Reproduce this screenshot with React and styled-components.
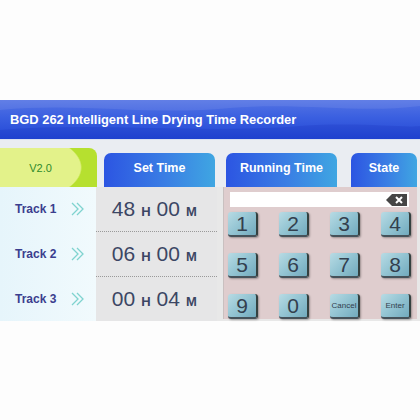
import React from "react";
import styled, { createGlobalStyle } from "styled-components";

const Global = createGlobalStyle`
  html, body { margin: 0; padding: 0; background: #ffffff; }
  body { font-family: "Liberation Sans", Arial, sans-serif; }
`;

const Page = styled.div`
  width: 420px;
  height: 420px;
  overflow: hidden;
  background: #fdfdfd;
  display: flex;
  flex-direction: column;
`;

const TopSpace = styled.div`
  height: 100px;
  flex: none;
`;

const Header = styled.div`
  position: relative;
  height: 39px;
  flex: none;
  background: linear-gradient(180deg, #5574e4 0%, #3a5fe0 45%, #2347d6 100%);
  display: flex;
  align-items: center;
  padding-left: 10px;
  overflow: hidden;
`;

const Wave = styled.svg`
  position: absolute;
  left: 0;
  top: 0;
  width: 420px;
  height: 39px;
`;

const Title = styled.span`
  position: relative;
  color: #ffffff;
  font-weight: bold;
  font-size: 12.9px;
`;

const Band = styled.div`
  height: 47px;
  flex: none;
  background: #eaedf2;
  display: flex;
  align-items: flex-end;
  border-top: 1px solid #d8dff0;
`;

const VersionTab = styled.div`
  width: 97px;
  height: 39px;
  border-top-right-radius: 8px;
  background: radial-gradient(ellipse 82px 38px at 0 50%, #e3f28a 0 98%, #b6e02f 100%);
  display: flex;
  align-items: center;
  justify-content: center;
  padding-right: 16px;
  box-sizing: border-box;
  color: #2f8a2a;
  font-size: 11px;
`;

const Tab = styled.div`
  margin-left: ${(p) => p.$ml}px;
  width: ${(p) => p.$w}px;
  height: 34px;
  border-radius: 7px 7px 0 0;
  background: linear-gradient(90deg, #2c55e2 0%, #3a7ee4 55%, #3fa6e2 100%);
  color: #ffffff;
  font-weight: bold;
  font-size: 12.5px;
  display: flex;
  align-items: center;
  justify-content: center;
  padding-bottom: 4px;
  box-sizing: border-box;
`;

const Body = styled.div`
  height: 134px;
  flex: none;
  display: flex;
`;

const LabelCol = styled.div`
  width: 97px;
  background: linear-gradient(90deg, #e6f5fb, #f1fafd);
  display: flex;
  flex-direction: column;
`;

const LabelRow = styled.div`
  flex: 1;
  display: flex;
  align-items: center;
  padding-left: 15px;
  gap: 14px;
  color: #3b3e8e;
  font-weight: bold;
  font-size: 12px;
`;

const TimeCol = styled.div`
  width: 123px;
  background: #e6e6e7;
  display: flex;
  flex-direction: column;
`;

const TimeRow = styled.div`
  flex: 1;
  display: flex;
  align-items: center;
  justify-content: center;
  gap: 6px;
  color: #3c4664;
  border-top: ${(p) => (p.$line ? "1px dotted #9a9a9a" : "none")};
  padding-right: 4px;
`;

const Num = styled.span`
  font-size: 21px;
`;

const Unit = styled.span`
  font-size: 13px;
  font-weight: bold;
  margin-top: 4px;
`;

const RightArea = styled.div`
  flex: 1;
  background: #e8e8e8;
  padding-left: 6px;
  padding-right: 3px;
  padding-bottom: 2px;
  display: flex;
`;

const Keypad = styled.div`
  flex: 1;
  background: #dfcdce;
  border-left: 1px solid #c9c0c0;
  padding: 5px 6px 0 4px;
  display: flex;
  flex-direction: column;
`;

const Input = styled.div`
  height: 16px;
  background: #ffffff;
  margin-left: 2px;
  margin-right: 2px;
  display: flex;
  align-items: center;
  justify-content: flex-end;
  padding-right: 2px;
`;

const Keys = styled.div`
  margin-top: 5px;
  display: grid;
  grid-template-columns: repeat(4, 30px);
  column-gap: 21px;
  row-gap: 16px;
`;

const Key = styled.div`
  height: 23px;
  border-radius: 3px;
  background: linear-gradient(135deg, #b8dbe4 0%, #96c6d4 45%, #72aabd 100%);
  border-right: 2px solid #34403f;
  border-bottom: 2px solid #46525a;
  box-shadow: 1px 1px 2px rgba(0, 0, 0, 0.3);
  display: flex;
  align-items: center;
  justify-content: center;
  color: #33404e;
  font-size: ${(p) => (p.$small ? "8px" : "21px")};
  line-height: 1;
`;

const Chevrons = () => (
  <svg width="16" height="16" viewBox="0 0 16 16" fill="none" stroke="#7fd3cf" strokeWidth="1.3">
    <path d="M2 2 L8 8 L2 14" />
    <path d="M7 2 L13 8 L7 14" />
  </svg>
);

const Backspace = () => (
  <svg width="21" height="12" viewBox="0 0 21 12">
    <path d="M6 0 H21 V12 H6 L0 6 Z" fill="#454545" />
    <path d="M10 3 L16 9 M16 3 L10 9" stroke="#ffffff" strokeWidth="2" />
  </svg>
);

const tracks = ["Track 1", "Track 2", "Track 3"];
const times = [
  ["48", "00"],
  ["06", "00"],
  ["00", "04"],
];
const keys = ["1", "2", "3", "4", "5", "6", "7", "8", "9", "0", "Cancel", "Enter"];

export default function App() {
  return (
    <Page>
      <Global />
      <TopSpace />
      <Header>
        <Wave viewBox="0 0 420 39" preserveAspectRatio="none">
          <path d="M0 10 C80 2 150 16 230 8 C300 2 360 14 420 6 L420 0 L0 0 Z" fill="rgba(255,255,255,0.08)" />
          <path d="M0 30 C100 22 200 34 300 26 C360 22 400 28 420 26 L420 39 L0 39 Z" fill="rgba(0,20,160,0.12)" />
        </Wave>
        <Title>BGD 262 Intelligent Line Drying Time Recorder</Title>
      </Header>
      <Band>
        <VersionTab>V2.0</VersionTab>
        <Tab $ml={7} $w={111}>Set Time</Tab>
        <Tab $ml={11} $w={111}>Running Time</Tab>
        <Tab $ml={14} $w={66}>State</Tab>
      </Band>
      <Body>
        <LabelCol>
          {tracks.map((t) => (
            <LabelRow key={t}>
              <span>{t}</span>
              <Chevrons />
            </LabelRow>
          ))}
        </LabelCol>
        <TimeCol>
          {times.map(([h, m], i) => (
            <TimeRow key={i} $line={i > 0}>
              <Num>{h}</Num>
              <Unit>H</Unit>
              <Num>{m}</Num>
              <Unit>M</Unit>
            </TimeRow>
          ))}
        </TimeCol>
        <RightArea>
          <Keypad>
            <Input>
              <Backspace />
            </Input>
            <Keys>
              {keys.map((k) => (
                <Key key={k} $small={k.length > 1}>
                  {k}
                </Key>
              ))}
            </Keys>
          </Keypad>
        </RightArea>
      </Body>
    </Page>
  );
}
